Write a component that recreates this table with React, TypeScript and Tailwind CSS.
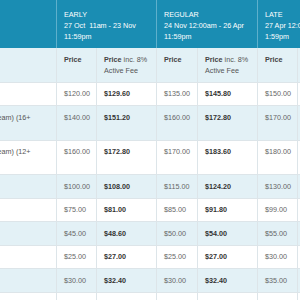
const ROWS = [
  { label: ["Individual"], p: ["120.00", "129.60", "135.00", "145.80", "150.00", "162.00"] },
  { label: ["Adult Mixed (Team) (16+", "years)"], p: ["140.00", "151.20", "160.00", "172.80", "170.00", "183.60"] },
  { label: ["Adult Mixed (Team) (12+", "years)"], p: ["160.00", "172.80", "170.00", "183.60", "180.00", "194.40"] },
  { label: ["Junior"], p: ["100.00", "108.00", "115.00", "124.20", "130.00", "140.40"] },
  { label: ["Youth"], p: ["75.00", "81.00", "85.00", "91.80", "99.00", "106.92"] },
  { label: ["Child"], p: ["45.00", "48.60", "50.00", "54.00", "55.00", "59.40"] },
  { label: ["Kids"], p: ["25.00", "27.00", "25.00", "27.00", "30.00", "32.40"] },
  { label: ["Tiny"], p: ["30.00", "32.40", "30.00", "32.40", "35.00", "37.80"] },
  { label: ["Spare"], p: ["20.00", "21.60", "20.00", "21.60", "25.00", "27.00"] },
];

const PERIODS = [
  { name: "EARLY", l1: "27 Oct\u00a0\u00a011am - 23 Nov", l2: "11:59pm" },
  { name: "REGULAR", l1: "24 Nov 12:00am - 26 Apr", l2: "11:59pm" },
  { name: "LATE", l1: "27 Apr 12:00am - 2 May", l2: "1:59pm" },
];

const cell = "border-r border-b border-[#dde5e9] px-[7px] py-[5.75px]";

export default function App() {
  return (
    <div
      className="w-[300px] h-[300px] overflow-hidden bg-white text-[7.2px] leading-[11px]"
      style={{ fontFamily: '"Liberation Sans", Arial, sans-serif' }}
    >
      <div className="-ml-[55px] grid w-[413px] grid-cols-[112px_40px_60px_41px_60px_40px_60px]">
        <div className="bg-[#1a8db3] border-r border-[#5eb0cc]" />
        {PERIODS.map((p) => (
          <div
            key={p.name}
            className="col-span-2 bg-[#1a8db3] border-r border-[#5eb0cc] px-[7px] pt-[9px] pb-[6px] text-white"
          >
            <div>{p.name}</div>
            <div className="whitespace-nowrap">{p.l1}</div>
            <div>{p.l2}</div>
          </div>
        ))}

        <div className={`${cell} bg-[#e3f1f6]`} />
        {PERIODS.map((p) => (
          <Sub key={p.name} />
        ))}

        {ROWS.map((r, i) => {
          const bg = i % 2 === 0 ? "bg-white" : "bg-[#e3f1f6]";
          return <Row key={i} bg={bg} label={r.label} prices={r.p} />;
        })}
      </div>
    </div>
  );
}

function Sub() {
  return (
    <>
      <div className={`${cell} bg-[#e3f1f6] font-bold text-[#444]`}>Price</div>
      <div className={`${cell} bg-[#e3f1f6] text-[#555]`}>
        <span className="font-bold text-[#444]">Price</span> inc. 8% Active Fee
      </div>
    </>
  );
}

function Row({ bg, label, prices }: { bg: string; label: string[]; prices: string[] }) {
  return (
    <>
      <div className={`${cell} ${bg} text-[#555]`}>
        {label.map((l) => (
          <div key={l} className="whitespace-nowrap">
            {l}
          </div>
        ))}
      </div>
      {prices.map((p, j) => (
        <div
          key={j}
          className={`${cell} ${bg} ${j % 2 === 1 ? "font-bold text-[#333]" : "text-[#666]"}`}
        >
          ${p}
        </div>
      ))}
    </>
  );
}
